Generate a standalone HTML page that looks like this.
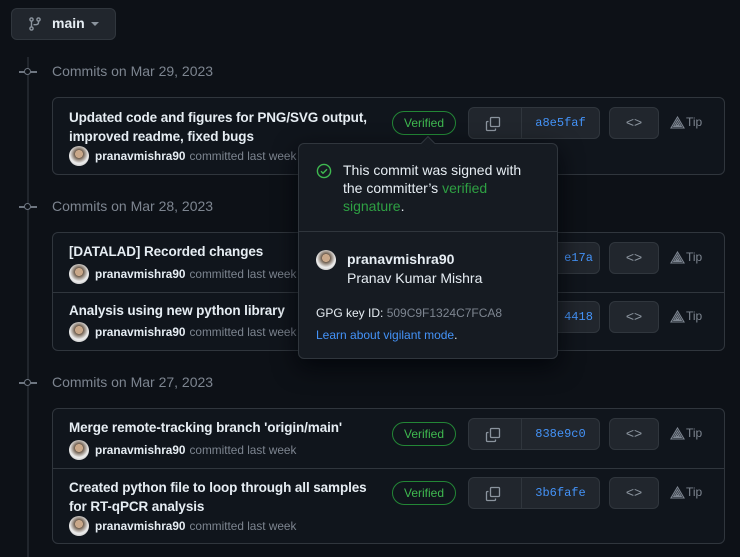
<!DOCTYPE html>
<html><head><style>
*{box-sizing:border-box;margin:0;padding:0}
body{width:740px;height:557px;background:#0d1117;font-family:"Liberation Sans",sans-serif;color:#e6edf3;position:relative;overflow:hidden}
.abs{position:absolute}
.btn{position:absolute;border:1px solid #30363d;background:#21262d;border-radius:6px}
.card{position:absolute;left:52px;width:673px;border:1px solid #30363d;border-radius:6px;background:#10151c}
.title{position:absolute;left:16px;font-size:13.5px;font-weight:bold;color:#e6edf3;line-height:19px;letter-spacing:-0.1px}
.meta{position:absolute;left:16px;font-size:11.8px;color:#7d8590;display:flex;align-items:center;white-space:nowrap}
.meta b{color:#e6edf3;margin:0 4px 0 6px}
.av{width:20px;height:20px;border-radius:50%;background:radial-gradient(circle at 50% 40%,#c9a88a 0 25%,#6b5a4a 26%,#eee 60%,#aaa 100%)}
.date{position:absolute;left:52px;font-size:14px;color:#7d8590}
.dot{position:absolute;left:19px;width:18px;height:2px;background:#6e7681}
.dot:after{content:"";position:absolute;left:5px;top:-3px;width:5px;height:5px;border:1.5px solid #6e7681;border-radius:50%;background:#0d1117}
.ver{position:absolute;width:64px;height:24px;border:1px solid #238636;border-radius:12px;color:#3fb950;font-size:12px;text-align:center;line-height:22px}
.grp{position:absolute;width:132px;height:32px}
.grp .c{position:absolute;left:0;top:0;width:54px;height:32px;border-radius:6px 0 0 6px}
.grp .h{position:absolute;left:53px;top:0;width:79px;height:32px;border-radius:0 6px 6px 0;color:#4493f8;font-family:"Liberation Mono",monospace;font-size:12px;text-align:center;line-height:30px}
.code{width:50px;height:32px;color:#8b949e;font-size:14px;text-align:center;line-height:29px}
.tip{position:absolute;font-size:12px;color:#7d8590;display:flex;align-items:center;gap:1px}
</style></head><body>
<div class="btn" style="left:11px;top:8px;width:105px;height:32px;"></div>
<svg class="abs" style="left:29px;top:17px" width="12" height="14" viewBox="0 0 12 14"><g fill="none" stroke="#8b949e" stroke-width="1.4"><circle cx="2.5" cy="2.5" r="1.6"/><circle cx="2.5" cy="11.5" r="1.6"/><circle cx="9.5" cy="2.5" r="1.6"/><path d="M2.5 4.1v5.8M9.5 4.1v1.4c0 1.5-1 2.2-3 2.2H4.5"/></g></svg>
<div class="abs" style="left:52px;top:15px;font-size:14px;font-weight:bold">main</div>
<div class="abs" style="left:91px;top:22px;width:0;height:0;border-left:4px solid transparent;border-right:4px solid transparent;border-top:4px solid #8b949e"></div>

<div class="abs" style="left:27px;top:57px;width:2px;height:500px;background:#21262d"></div>
<div class="dot" style="top:71px"></div><div class="date" style="top:63px">Commits on Mar 29, 2023</div>
<div class="dot" style="top:206px"></div><div class="date" style="top:198px">Commits on Mar 28, 2023</div>
<div class="dot" style="top:382px"></div><div class="date" style="top:374px">Commits on Mar 27, 2023</div>

<div class="card" style="top:97px;height:78px"></div>
<div class="card" style="top:232px;height:119px"><div style="position:absolute;left:0;right:0;top:59px;height:1px;background:#30363d"></div></div>
<div class="card" style="top:408px;height:136px"><div style="position:absolute;left:0;right:0;top:59px;height:1px;background:#30363d"></div></div>

<div class="title" style="left:69px;top:108px">Updated code and figures for PNG/SVG output,<br>improved readme, fixed bugs</div>
<div class="meta" style="left:69px;top:146px"><div class="av"></div><b>pranavmishra90</b>committed last week</div>
<div class="ver" style="left:392px;top:111px">Verified</div>
<div class="title" style="left:69px;top:242px">[DATALAD] Recorded changes</div>
<div class="meta" style="left:69px;top:264px"><div class="av"></div><b>pranavmishra90</b>committed last week</div>
<div class="title" style="left:69px;top:301px">Analysis using new python library</div>
<div class="meta" style="left:69px;top:322px"><div class="av"></div><b>pranavmishra90</b>committed last week</div>
<div class="title" style="left:69px;top:418px">Merge remote-tracking branch 'origin/main'</div>
<div class="meta" style="left:69px;top:440px"><div class="av"></div><b>pranavmishra90</b>committed last week</div>
<div class="ver" style="left:392px;top:422px">Verified</div>
<div class="title" style="left:69px;top:478px">Created python file to loop through all samples<br>for RT-qPCR analysis</div>
<div class="meta" style="left:69px;top:516px"><div class="av"></div><b>pranavmishra90</b>committed last week</div>
<div class="ver" style="left:392px;top:481px">Verified</div>

<div class="grp" style="left:468px;top:107px"><div class="btn c"></div><div class="btn h">a8e5faf</div></div>
<div class="grp" style="left:468px;top:242px"><div class="btn c"></div><div class="btn h">&nbsp;&nbsp;&nbsp;&nbsp;&nbsp;e17a</div></div>
<div class="grp" style="left:468px;top:301px"><div class="btn c"></div><div class="btn h">&nbsp;&nbsp;&nbsp;&nbsp;&nbsp;4418</div></div>
<div class="grp" style="left:468px;top:418px"><div class="btn c"></div><div class="btn h">838e9c0</div></div>
<div class="grp" style="left:468px;top:477px"><div class="btn c"></div><div class="btn h">3b6fafe</div></div>
<svg class="abs" style="left:485px;top:116px" width="16" height="16" viewBox="0 0 16 16"><g fill="none" stroke="#8b949e" stroke-width="1.3"><rect x="5.5" y="1.5" width="9" height="9" rx="1"/><path d="M3.5 5.5h-1a1 1 0 0 0-1 1v7a1 1 0 0 0 1 1h7a1 1 0 0 0 1-1v-1"/></g></svg>
<svg class="abs" style="left:485px;top:427px" width="16" height="16" viewBox="0 0 16 16"><g fill="none" stroke="#8b949e" stroke-width="1.3"><rect x="5.5" y="1.5" width="9" height="9" rx="1"/><path d="M3.5 5.5h-1a1 1 0 0 0-1 1v7a1 1 0 0 0 1 1h7a1 1 0 0 0 1-1v-1"/></g></svg>
<svg class="abs" style="left:485px;top:486px" width="16" height="16" viewBox="0 0 16 16"><g fill="none" stroke="#8b949e" stroke-width="1.3"><rect x="5.5" y="1.5" width="9" height="9" rx="1"/><path d="M3.5 5.5h-1a1 1 0 0 0-1 1v7a1 1 0 0 0 1 1h7a1 1 0 0 0 1-1v-1"/></g></svg>

<div class="btn code" style="left:609px;top:107px">&lt;&gt;</div>
<div class="btn code" style="left:609px;top:242px">&lt;&gt;</div>
<div class="btn code" style="left:609px;top:301px">&lt;&gt;</div>
<div class="btn code" style="left:609px;top:418px">&lt;&gt;</div>
<div class="btn code" style="left:609px;top:477px">&lt;&gt;</div>

<div class="tip" style="left:670px;top:115px"><svg width="15" height="13" viewBox="0 0 15 13"><path d="M7.5 1L14 12H1z M7.5 4L11.3 10.5H3.7z M7.5 7L9 9.5H6z" fill="none" stroke="#7d8590" stroke-width="1.1"/></svg>Tip</div>
<div class="tip" style="left:670px;top:250px"><svg width="15" height="13" viewBox="0 0 15 13"><path d="M7.5 1L14 12H1z M7.5 4L11.3 10.5H3.7z M7.5 7L9 9.5H6z" fill="none" stroke="#7d8590" stroke-width="1.1"/></svg>Tip</div>
<div class="tip" style="left:670px;top:309px"><svg width="15" height="13" viewBox="0 0 15 13"><path d="M7.5 1L14 12H1z M7.5 4L11.3 10.5H3.7z M7.5 7L9 9.5H6z" fill="none" stroke="#7d8590" stroke-width="1.1"/></svg>Tip</div>
<div class="tip" style="left:670px;top:426px"><svg width="15" height="13" viewBox="0 0 15 13"><path d="M7.5 1L14 12H1z M7.5 4L11.3 10.5H3.7z M7.5 7L9 9.5H6z" fill="none" stroke="#7d8590" stroke-width="1.1"/></svg>Tip</div>
<div class="tip" style="left:670px;top:485px"><svg width="15" height="13" viewBox="0 0 15 13"><path d="M7.5 1L14 12H1z M7.5 4L11.3 10.5H3.7z M7.5 7L9 9.5H6z" fill="none" stroke="#7d8590" stroke-width="1.1"/></svg>Tip</div>

<div class="abs" style="left:298px;top:143px;width:260px;height:216px;background:#161b22;border:1px solid #30363d;border-radius:6px;box-shadow:0 8px 24px rgba(1,4,9,.8)">
  <div class="abs" style="left:124px;top:-6px;width:10px;height:10px;background:#161b22;border-left:1px solid #30363d;border-top:1px solid #30363d;transform:rotate(45deg)"></div>
  <svg class="abs" style="left:17px;top:19px" width="16" height="16" viewBox="0 0 16 16"><circle cx="8" cy="8" r="6.6" fill="none" stroke="#3fb950" stroke-width="1.4"/><path d="M5 8.2l2 2 4-4" fill="none" stroke="#3fb950" stroke-width="1.4"/></svg>
  <div class="abs" style="left:44px;top:17px;font-size:14px;line-height:18px;color:#e6edf3;width:200px">This commit was signed with the committer’s <span style="color:#2ea043">verified signature</span>.</div>
  <div class="abs" style="left:0;right:0;top:87px;height:1px;background:#30363d"></div>
  <div class="abs av" style="left:17px;top:106px"></div>
  <div class="abs" style="left:48px;top:106px;font-size:14px;line-height:19px"><b>pranavmishra90</b><br>Pranav Kumar Mishra</div>
  <div class="abs" style="left:17px;top:162px;font-size:12px;color:#e6edf3">GPG key ID: <span style="color:#7d8590">509C9F1324C7FCA8</span></div>
  <div class="abs" style="left:17px;top:184px;font-size:12px;color:#e6edf3"><span style="color:#4493f8">Learn about vigilant mode</span>.</div>
</div>
</body></html>
